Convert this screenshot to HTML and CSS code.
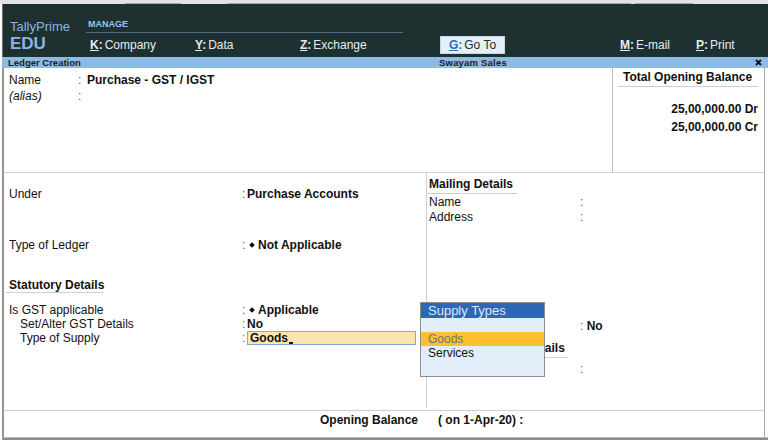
FILE: index.html
```html
<!DOCTYPE html>
<html>
<head>
<meta charset="utf-8">
<title>TallyPrime - Ledger Creation</title>
<link rel="stylesheet" href="styles.css">
</head>
<body>
<div class="app">
  <div class="topstrip"><span class="seg seg1"></span><span class="seg seg2"></span><span class="seg seg3"></span></div>
  <div class="frame">
    <header class="hdr">
      <div class="brand">
        <div class="brand-name">TallyPrime</div>
        <div class="brand-ed">EDU</div>
      </div>
      <div class="menu">
        <div class="menu-top">MANAGE</div>
        <div class="menu-items">
          <span class="mi mi-k"><span class="key"><u>K</u>:</span>Company</span>
          <span class="mi mi-y"><span class="key"><u>Y</u>:</span>Data</span>
          <span class="mi mi-z"><span class="key"><u>Z</u>:</span>Exchange</span>
          <span class="mi mi-g"><span class="goto"><span class="key"><u>G</u>:</span>Go To</span></span>
          <span class="mi mi-m"><span class="key"><u>M</u>:</span>E-mail</span>
          <span class="mi mi-p"><span class="key"><u>P</u>:</span>Print</span>
        </div>
      </div>
    </header>
    <div class="titlebar">
      <div class="tb-left">Ledger Creation</div>
      <div class="tb-mid">Swayam Sales</div>
      <div class="tb-close"><svg width="7" height="7" viewBox="0 0 7 7"><path d="M1 1L6 6M6 1L1 6" stroke="#111" stroke-width="1.8"/></svg></div>
    </div>
    <main class="main">
      <section class="top">
        <div class="top-left">
          <div class="row-top"><span class="lbl">Name</span><span class="colon">:</span><span class="val">Purchase - GST / IGST</span></div>
          <div class="row-top"><span class="lbl alias">(alias)</span><span class="colon">:</span><span class="val"></span></div>
        </div>
        <div class="top-box">
          <div class="tob-title">Total Opening Balance</div>
          <div class="tob-vals">
            <div>25,00,000.00 Dr</div>
            <div>25,00,000.00 Cr</div>
          </div>
        </div>
      </section>
      <section class="mid">
        <div class="mid-left">
          <div class="frow"><span class="lbl">Under</span><span class="colon">:</span><span class="val">Purchase Accounts</span></div>
          <div class="frow r-ledger"><span class="lbl">Type of Ledger</span><span class="colon">:</span><span class="val"><span class="dia"></span>Not Applicable</span></div>
          <div class="sec">Statutory Details</div>
          <div class="frow r-gst"><span class="lbl">Is GST applicable</span><span class="colon">:</span><span class="val"><span class="dia"></span>Applicable</span></div>
          <div class="frow"><span class="lbl sub">Set/Alter GST Details</span><span class="colon">:</span><span class="val">No</span></div>
          <div class="frow"><span class="lbl sub">Type of Supply</span><span class="colon">:</span><span class="val"><span class="input">Goods<span class="caret"></span></span></span></div>
        </div>
        <div class="mid-right">
          <div class="mhead">Mailing Details</div>
          <div class="mrow m-first"><span class="lbl">Name</span><span class="colon">:</span></div>
          <div class="mrow"><span class="lbl">Address</span><span class="colon">:</span></div>
          <div class="mrow m-bank"><span class="lbl"></span><span class="colon">: <b class="val">No</b></span></div>
          <div class="mhead m-tax">Tax Registration Details</div>
          <div class="mrow m-pan"><span class="lbl"></span><span class="colon">:</span></div>
        </div>
      </section>
      <section class="foot">
        <span class="foot-a">Opening Balance</span>
        <span class="foot-b">( on 1-Apr-20) :</span>
      </section>
    </main>
    <div class="bottombar"></div>
  </div>
  <div class="popup">
    <div class="pop-head">Supply Types</div>
    <div class="pop-gap"></div>
    <div class="pop-item sel">Goods</div>
    <div class="pop-item">Services</div>
  </div>
</div>
</body>
</html>
```
FILE: styles.css
```css
* { box-sizing: border-box; margin: 0; padding: 0; }
body { margin: 0; background: #fff; font-family: "Liberation Sans", Arial, sans-serif; font-size: 12px; color: #111; }
.app { position: relative; width: 768px; height: 440px; overflow: hidden; background: #fff; }

.topstrip { height: 4px; background: #e2e2e2; display: flex; align-items: flex-end; }
.seg { height: 1px; background: #8fa9d4; }
.seg1 { margin-left: 125px; width: 56px; }
.seg2 { margin-left: 47px; width: 403px; }
.seg3 { margin-left: 4px; width: 58px; }

.frame { margin-left: 2px; }
.hdr { height: 53px; background: #1e3130; display: flex; border-left: 1px solid #6d6d6d; }
.brand { width: 83px; padding: 15px 0 0 7px; }
.brand-name { font-size: 13px; line-height: 15px; color: #8ab6e3; }
.brand-ed { font-size: 17px; font-weight: bold; line-height: 18px; color: #8ab6e3; margin-top: 1px; }

.menu { flex: 1; }
.menu-top { width: 317px; padding: 15px 0 2px 2px; border-bottom: 1px solid #4d6b80; font-size: 9px; font-weight: bold; line-height: 11px; color: #9cc3ea; }
.menu-items { display: flex; align-items: center; height: 18px; margin-top: 3px; padding-left: 4px; font-size: 12px; color: #e6ecf1; }
.mi { display: flex; align-items: center; }
.mi-k, .mi-y { width: 105px; }
.mi-z { width: 140px; }
.mi-g { width: 180px; }
.mi-m { width: 76px; }
.key { font-weight: bold; margin-right: 2px; }
.goto { width: 65px; height: 18px; background: #e4eff9; color: #2a2a2a; display: flex; align-items: center; justify-content: center; border: 1px solid #c5d6e8; }
.goto .key { color: #2e6db4; }

.titlebar { height: 11px; background: #8cbbe4; display: flex; font-size: 9.5px; font-weight: bold; line-height: 11px; color: #1b1b1b; }
.tb-left { width: 437px; padding-left: 6px; }
.tb-mid { flex: 1; letter-spacing: 0.2px; }
.tb-close { width: 13px; display: flex; align-items: center; }

.main { height: 369px; width: 763px; border-left: 2px solid #959595; border-right: 1px solid #a8a8a8; display: flex; flex-direction: column; }

.top { height: 105px; display: flex; border-bottom: 1px solid #d2d2d2; flex: none; }
.top-left { flex: 1; padding: 4px 0 0 5px; }
.row-top { display: grid; grid-template-columns: 69px 9px 1fr; line-height: 16px; }
.alias { font-style: italic; }
.colon { color: #666; }
.val { font-weight: bold; color: #111; }
.top-box { width: 152px; border-left: 1px solid #bdbdbd; }
.tob-title { margin: 0 6px 0 5px; padding: 2px 0 2px 5px; border-bottom: 1px solid #cfcfcf; font-weight: bold; line-height: 14px; }
.tob-vals { padding: 13px 6px 0 0; text-align: right; font-weight: bold; line-height: 18px; }

.mid { height: 237px; display: flex; flex: none; }
.mid-left { width: 422px; padding: 14px 0 0 5px; }
.frow { display: grid; grid-template-columns: 233px 5px 1fr; line-height: 14px; }
.r-ledger { margin-top: 37px; }
.sec { margin-top: 26px; margin-left: -3px; padding: 0 3px; width: 98px; white-space: nowrap; font-weight: bold; line-height: 14px; border-bottom: 1px solid #cfcfcf; }
.r-gst { margin-top: 10px; }
.sub { padding-left: 11px; }
.dia { display: inline-block; width: 4px; height: 4px; background: #111; transform: rotate(45deg); margin: 0 4px 2px 3px; vertical-align: middle; }
.input { display: block; height: 14px; width: 169px; background: #fee4b1; border: 1px solid #7fa9d6; line-height: 12px; padding-left: 2px; }
.caret { display: inline-block; width: 4px; height: 2px; background: #111; vertical-align: -2px; margin-left: 1px; }

.mid-right { flex: 1; border-left: 1px solid #d0d0d0; padding-top: 4px; margin-bottom: 2px; }
.mhead { width: 90px; font-weight: bold; line-height: 14px; padding: 0 0 2px 2px; border-bottom: 1px solid #cfcfcf; white-space: nowrap; }
.mrow { display: grid; grid-template-columns: 151px 1fr; line-height: 15px; padding-left: 2px; }
.m-first { margin-top: 1px; }
.m-bank { margin-top: 94px; line-height: 14px; }
.m-tax { width: 141px; margin-top: 8px; }
.m-pan { margin-top: 4px; line-height: 14px; }

.foot { height: 27px; border-top: 1px solid #cdcdcd; display: flex; padding: 2px 0 0 316px; font-weight: bold; line-height: 14px; flex: none; }
.foot-a { width: 118px; }

.bottombar { height: 3px; background: #8d8d8d; border-top: 1px solid #b4b4b4; }

.popup { position: absolute; left: 420px; top: 302px; width: 125px; height: 75px; border: 1px solid #8d8d8d; background: #e2eefa; }
.pop-head { height: 15px; background: #2c68b3; color: #dde9f6; font-size: 13px; line-height: 15px; padding-left: 7px; }
.pop-gap { height: 14px; }
.pop-item { height: 14px; line-height: 14px; padding-left: 7px; color: #111; }
.pop-item.sel { background: #fcc22e; color: #6f7078; }
```
